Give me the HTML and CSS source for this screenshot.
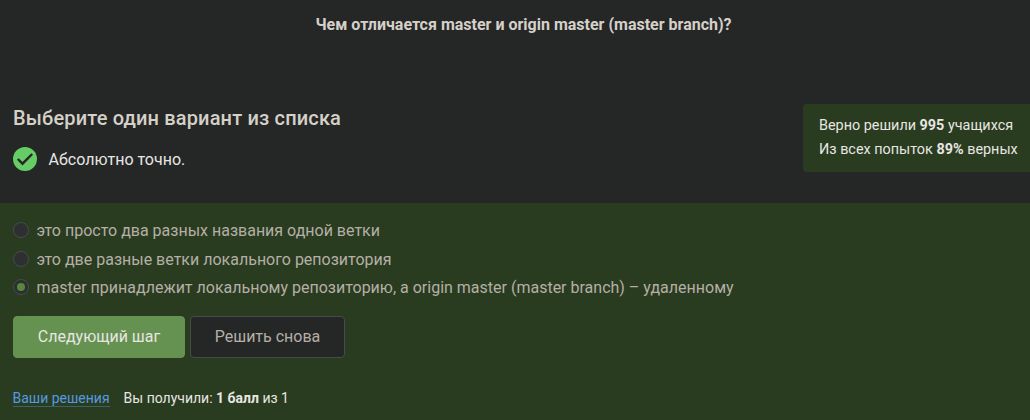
FILE: index.html
```
<!DOCTYPE html>
<html lang="ru">
<head>
<meta charset="utf-8">
<title>Тест</title>
<link rel="stylesheet" href="styles.css">
</head>
<body>
<main class="quiz">
  <h1 class="question">Чем отличается master и origin master (master branch)?</h1>
  <header class="status">
    <div class="status-main">
      <h2 class="prompt">Выберите один вариант из списка</h2>
      <div class="verdict">
        <svg class="verdict-icon" viewBox="0 0 24 24"><circle cx="12" cy="12" r="12"/><path d="M4.8 12l4.7 4.7L19.2 7"/></svg>
        <span>Абсолютно точно.</span>
      </div>
    </div>
    <aside class="stats">
      <div>Верно решили <b>995</b> учащихся</div>
      <div>Из всех попыток <b>89%</b> верных</div>
    </aside>
  </header>
  <section class="answers">
    <ul class="options">
      <li class="option"><span class="radio"></span><span>это просто два разных названия одной ветки</span></li>
      <li class="option"><span class="radio"></span><span>это две разные ветки локального репозитория</span></li>
      <li class="option"><span class="radio checked"></span><span>master принадлежит локальному репозиторию, а origin master (master branch) – удаленному</span></li>
    </ul>
    <div class="actions">
      <button class="btn btn-next">Следующий шаг</button>
      <button class="btn btn-retry">Решить снова</button>
    </div>
    <footer class="result">
      <a class="link" href="#">Ваши решения</a>
      <span>Вы получили: <b>1 балл</b> из 1</span>
    </footer>
  </section>
</main>
</body>
</html>
```
FILE: styles.css
```
* { box-sizing: border-box; }
body { margin: 0; background: #252727; color: #e8e6e3; font: 16px/24px Roboto, sans-serif; }
.quiz { height: 420px; overflow: hidden; display: flex; flex-direction: column; }
.question { margin: 0; padding: 13px 0 0 17px; height: 104px; text-align: center; font-size: 16px; font-weight: 700; line-height: 24px; color: #d5d0c8; }
.status { display: flex; justify-content: space-between; align-items: flex-start; height: 99px; padding-left: 13px; }
.prompt { margin: 0; font-size: 20px; line-height: 28px; font-weight: 500; letter-spacing: 0.16px; color: #d5d0c8; }
.verdict { display: flex; align-items: flex-start; gap: 11.5px; margin-top: 15px; }
.verdict span { padding-top: 1px; }
.verdict-icon { width: 24px; height: 24px; }
.verdict-icon circle { fill: #66cc66; }
.verdict-icon path { fill: none; stroke: #252727; stroke-width: 2.4; }
.stats { width: 227px; height: 68px; padding: 10px 0 0 16px; background: #293c20; border-radius: 4px 0 0 4px; font-size: 14.4px; line-height: 24px; white-space: nowrap; }
.answers { flex: 1; background: #293c20; padding: 13px 13px 0; }
.options { list-style: none; margin: 0; padding: 0; }
.option { display: flex; align-items: center; gap: 7.5px; height: 28.5px; color: #b5afa6; }
.option span:last-child { padding-top: 2px; }
.radio { display: flex; align-items: center; justify-content: center; width: 16px; height: 16px; border-radius: 50%; background: #2d2f30; border: 1px solid #484b4d; }
.checked::after { content: ""; width: 8px; height: 8px; border-radius: 50%; background: #57883e; }
.actions { display: flex; gap: 5px; margin-top: 14px; }
.btn { height: 42px; padding: 0; border: 1px solid #484b4d; border-radius: 4px; font: 16px/24px Roboto, sans-serif; }
.btn-next { width: 172px; background: #659251; border-color: #659251; color: #e8e6e3; }
.btn-retry { width: 155px; background: #252727; color: #b5afa6; }
.result { display: flex; align-items: flex-start; gap: 14px; margin-top: 28px; margin-left: -0.5px; font-size: 14px; line-height: 24px; }
.link { margin-top: 4px; height: 17px; line-height: 16px; border-bottom: 1px solid #3a6468; color: #559ae0; text-decoration: none; }
```
